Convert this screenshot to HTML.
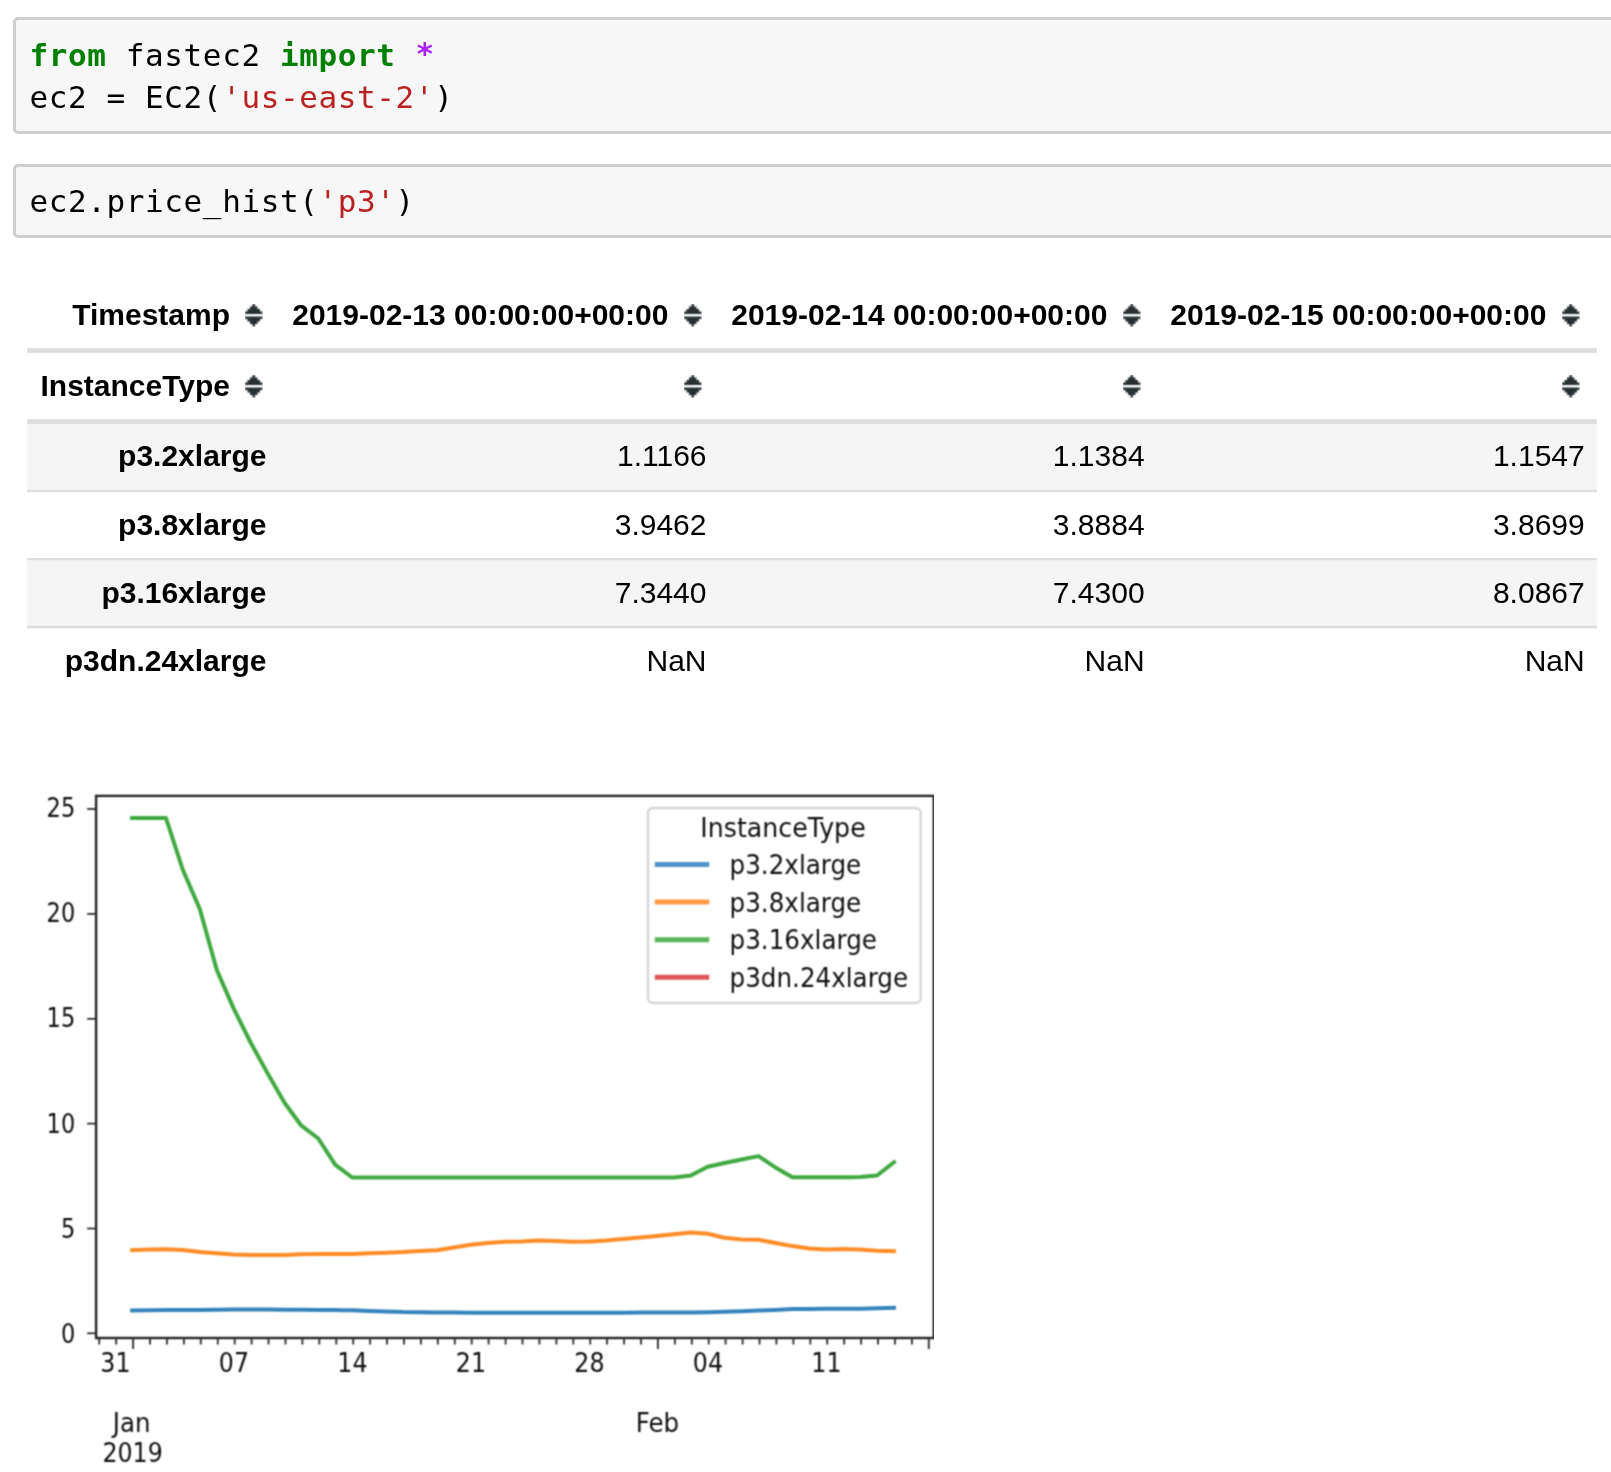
<!DOCTYPE html>
<html><head><meta charset="utf-8"><title>fastec2 price_hist</title>
<style>
html,body{margin:0;padding:0;background:#fff;}
body{width:1611px;height:1472px;position:relative;overflow:hidden;font-family:"Liberation Sans",Arial,sans-serif;color:#000;}
.cell{will-change:transform;position:absolute;left:13.3px;width:1640px;box-sizing:border-box;border:3px solid #cfcfcf;border-radius:5px;background:#f7f7f7;}
.cell pre{margin:0;position:absolute;left:13.4px;font-family:"DejaVu Sans Mono","Liberation Mono",monospace;font-size:31px;letter-spacing:0.61px;line-height:42.2px;color:#000;white-space:pre;}
.k{color:#008000;font-weight:bold;}
.o{color:#aa22ff;font-weight:bold;position:relative;top:-2.2px;left:0.5px;}
.s{color:#ba2121;}
#c1{top:17.1px;height:116.7px;}
#c2{top:164.2px;height:73.9px;}
.tbl{will-change:transform;position:absolute;left:27.1px;top:282px;width:1569.8px;font-size:30px;}
.row{position:absolute;left:0;width:100%;box-sizing:border-box;}
.row div{position:absolute;top:0;height:100%;text-align:right;white-space:nowrap;}
.hd{font-weight:bold;height:71px;}
.c0{left:0;width:239.5px;font-weight:bold;}
.c1{left:252px;width:427.5px;}
.c2{left:691px;width:426.6px;}
.c3{left:1130px;width:427.7px;}
.hd .c0{width:203px;} .hd .c1{width:389.4px;} .hd .c2{width:389.4px;} .hd .c3{width:389.4px;}
.si-w{position:absolute;top:0;height:100%;width:23.5px;}
.si{position:absolute;top:19.3px;left:0;}
.br{height:68.2px;line-height:65.8px;}
.br div{top:2.4px;height:65.8px;}
.tbg{position:absolute;left:0;top:0;}
.chart{position:absolute;left:0;top:760px;}
.tk{font-family:"DejaVu Sans",sans-serif;font-size:25px;fill:#111;}


</style></head><body>
<div class="cell" id="c1"><pre style="top:14px"><span class="k">from</span> fastec2 <span class="k">import</span> <span class="o">*</span>
ec2 = EC2(<span class="s">'us-east-2'</span>)</pre></div>
<div class="cell" id="c2"><pre style="top:12.8px">ec2.price_hist(<span class="s">'p3'</span>)</pre></div>

<svg class="tbg" width="1611" height="700" viewBox="0 0 1611 700">
<rect x="27.1" y="423.8" width="1569.8" height="65.9" fill="#f5f5f5"/>
<rect x="27.1" y="560.4" width="1569.8" height="65.4" fill="#f5f5f5"/>
<rect x="27.1" y="348.2" width="1569.8" height="4.7" fill="#ddd"/>
<rect x="27.1" y="419.2" width="1569.8" height="4.7" fill="#ddd"/>
<rect x="27.1" y="489.7" width="1569.8" height="2.4" fill="#ddd"/>
<rect x="27.1" y="558.0" width="1569.8" height="2.4" fill="#ddd"/>
<rect x="27.1" y="625.8" width="1569.8" height="2.5" fill="#ddd"/>
</svg>
<div class="tbl">
 <div class="row hd" style="top:0;line-height:66px">
  <div class="c0">Timestamp</div><div class="c1">2019-02-13 00:00:00+00:00</div><div class="c2">2019-02-14 00:00:00+00:00</div><div class="c3">2019-02-15 00:00:00+00:00</div>
  <span class="si-w" style="left:215.2px"><svg class="si" width="23.5" height="28.5" viewBox="-3 -3 23.5 28.5"><path d="M7.5 0h2.5v2.5h-2.5zM5 2.5h7.5v2.5h-7.5zM2.5 5h12.5v2.5h-12.5zM0 7.5h17.5v2.5h-17.5zM0 12.5h17.5v2.5h-17.5zM2.5 15h12.5v2.5h-12.5zM5 17.5h7.5v2.5h-7.5zM7.5 20h2.5v2.5h-2.5z" fill="#283033" filter="url(#bl)"/></svg></span><span class="si-w" style="left:654.1px"><svg class="si" width="23.5" height="28.5" viewBox="-3 -3 23.5 28.5"><path d="M7.5 0h2.5v2.5h-2.5zM5 2.5h7.5v2.5h-7.5zM2.5 5h12.5v2.5h-12.5zM0 7.5h17.5v2.5h-17.5zM0 12.5h17.5v2.5h-17.5zM2.5 15h12.5v2.5h-12.5zM5 17.5h7.5v2.5h-7.5zM7.5 20h2.5v2.5h-2.5z" fill="#283033" filter="url(#bl)"/></svg></span><span class="si-w" style="left:1092.95px"><svg class="si" width="23.5" height="28.5" viewBox="-3 -3 23.5 28.5"><path d="M7.5 0h2.5v2.5h-2.5zM5 2.5h7.5v2.5h-7.5zM2.5 5h12.5v2.5h-12.5zM0 7.5h17.5v2.5h-17.5zM0 12.5h17.5v2.5h-17.5zM2.5 15h12.5v2.5h-12.5zM5 17.5h7.5v2.5h-7.5zM7.5 20h2.5v2.5h-2.5z" fill="#283033" filter="url(#bl)"/></svg></span><span class="si-w" style="left:1532.05px"><svg class="si" width="23.5" height="28.5" viewBox="-3 -3 23.5 28.5"><path d="M7.5 0h2.5v2.5h-2.5zM5 2.5h7.5v2.5h-7.5zM2.5 5h12.5v2.5h-12.5zM0 7.5h17.5v2.5h-17.5zM0 12.5h17.5v2.5h-17.5zM2.5 15h12.5v2.5h-12.5zM5 17.5h7.5v2.5h-7.5zM7.5 20h2.5v2.5h-2.5z" fill="#283033" filter="url(#bl)"/></svg></span>
 </div>
 <div class="row hd" style="top:71px;line-height:66px">
  <div class="c0">InstanceType</div>
  <span class="si-w" style="left:215.2px"><svg class="si" width="23.5" height="28.5" viewBox="-3 -3 23.5 28.5"><path d="M7.5 0h2.5v2.5h-2.5zM5 2.5h7.5v2.5h-7.5zM2.5 5h12.5v2.5h-12.5zM0 7.5h17.5v2.5h-17.5zM0 12.5h17.5v2.5h-17.5zM2.5 15h12.5v2.5h-12.5zM5 17.5h7.5v2.5h-7.5zM7.5 20h2.5v2.5h-2.5z" fill="#283033" filter="url(#bl)"/></svg></span><span class="si-w" style="left:654.1px"><svg class="si" width="23.5" height="28.5" viewBox="-3 -3 23.5 28.5"><path d="M7.5 0h2.5v2.5h-2.5zM5 2.5h7.5v2.5h-7.5zM2.5 5h12.5v2.5h-12.5zM0 7.5h17.5v2.5h-17.5zM0 12.5h17.5v2.5h-17.5zM2.5 15h12.5v2.5h-12.5zM5 17.5h7.5v2.5h-7.5zM7.5 20h2.5v2.5h-2.5z" fill="#283033" filter="url(#bl)"/></svg></span><span class="si-w" style="left:1092.95px"><svg class="si" width="23.5" height="28.5" viewBox="-3 -3 23.5 28.5"><path d="M7.5 0h2.5v2.5h-2.5zM5 2.5h7.5v2.5h-7.5zM2.5 5h12.5v2.5h-12.5zM0 7.5h17.5v2.5h-17.5zM0 12.5h17.5v2.5h-17.5zM2.5 15h12.5v2.5h-12.5zM5 17.5h7.5v2.5h-7.5zM7.5 20h2.5v2.5h-2.5z" fill="#283033" filter="url(#bl)"/></svg></span><span class="si-w" style="left:1532.05px"><svg class="si" width="23.5" height="28.5" viewBox="-3 -3 23.5 28.5"><path d="M7.5 0h2.5v2.5h-2.5zM5 2.5h7.5v2.5h-7.5zM2.5 5h12.5v2.5h-12.5zM0 7.5h17.5v2.5h-17.5zM0 12.5h17.5v2.5h-17.5zM2.5 15h12.5v2.5h-12.5zM5 17.5h7.5v2.5h-7.5zM7.5 20h2.5v2.5h-2.5z" fill="#283033" filter="url(#bl)"/></svg></span>
 </div>
 <div class="row br" style="top:138.8px"><div class="c0">p3.2xlarge</div><div class="c1">1.1166</div><div class="c2">1.1384</div><div class="c3">1.1547</div></div>
 <div class="row br" style="top:207.6px"><div class="c0">p3.8xlarge</div><div class="c1">3.9462</div><div class="c2">3.8884</div><div class="c3">3.8699</div></div>
 <div class="row br" style="top:275.8px"><div class="c0">p3.16xlarge</div><div class="c1">7.3440</div><div class="c2">7.4300</div><div class="c3">8.0867</div></div>
 <div class="row br" style="top:344px"><div class="c0">p3dn.24xlarge</div><div class="c1">NaN</div><div class="c2">NaN</div><div class="c3">NaN</div></div>
</div>
<svg class="chart" width="1611" height="712" viewBox="0 760 1611 712">
<defs><filter id="bl" x="0" y="0" width="100%" height="100%" color-interpolation-filters="sRGB"><feConvolveMatrix order="3" kernelMatrix="1 2 1 2 4 2 1 2 1" divisor="16" edgeMode="none" preserveAlpha="false"/></filter></defs>
<g class="plot" filter="url(#bl)">
<path d="M132.1 1310.4 L149.0 1310.3 L166.0 1310.1 L182.9 1310.0 L199.8 1309.9 L216.8 1309.8 L233.7 1309.6 L250.6 1309.5 L267.5 1309.6 L284.5 1309.7 L301.4 1309.8 L318.3 1310.0 L335.3 1310.1 L352.2 1310.3 L369.1 1310.9 L386.0 1311.4 L403.0 1312.0 L419.9 1312.2 L436.8 1312.4 L453.8 1312.6 L470.7 1312.8 L487.6 1312.8 L504.6 1312.8 L521.5 1312.8 L538.4 1312.7 L555.4 1312.7 L572.3 1312.7 L589.2 1312.7 L606.1 1312.7 L623.1 1312.7 L640.0 1312.6 L656.9 1312.6 L673.9 1312.6 L690.8 1312.6 L707.7 1312.2 L724.6 1311.7 L741.6 1311.3 L758.5 1310.6 L775.4 1309.9 L792.4 1309.0 L809.3 1308.9 L826.2 1308.8 L843.2 1308.8 L860.1 1308.7 L877.0 1308.2 L894.0 1307.8" fill="none" stroke="#1f77b4" stroke-opacity="0.9" stroke-width="4" stroke-linecap="square" stroke-linejoin="round"/>
<path d="M132.1 1250.2 L149.0 1249.6 L166.0 1249.3 L182.9 1249.9 L199.8 1252.1 L216.8 1253.3 L233.7 1254.6 L250.6 1254.9 L267.5 1254.9 L284.5 1254.9 L301.4 1254.3 L318.3 1254.0 L335.3 1254.0 L352.2 1254.0 L369.1 1253.3 L386.0 1252.7 L403.0 1252.1 L419.9 1251.1 L436.8 1250.2 L453.8 1247.5 L470.7 1244.8 L487.6 1243.0 L504.6 1241.8 L521.5 1241.5 L538.4 1240.6 L555.4 1240.9 L572.3 1241.8 L589.2 1241.5 L606.1 1240.6 L623.1 1239.0 L640.0 1237.5 L656.9 1236.0 L673.9 1234.3 L690.8 1232.5 L707.7 1233.7 L724.6 1237.8 L741.6 1239.5 L758.5 1239.8 L775.4 1243.0 L792.4 1246.1 L809.3 1248.5 L826.2 1249.4 L843.2 1249.0 L860.1 1249.6 L877.0 1250.8 L894.0 1251.3" fill="none" stroke="#ff7f0e" stroke-opacity="0.9" stroke-width="4" stroke-linecap="square" stroke-linejoin="round"/>
<path d="M132.1 818.1 L149.0 818.1 L166.0 818.1 L182.9 870.0 L199.8 909.0 L216.8 970.0 L233.7 1008.6 L250.6 1042.5 L267.5 1073.1 L284.5 1102.8 L301.4 1125.7 L318.3 1138.5 L335.3 1164.8 L352.2 1177.5 L369.1 1177.5 L386.0 1177.5 L403.0 1177.5 L419.9 1177.5 L436.8 1177.5 L453.8 1177.5 L470.7 1177.5 L487.6 1177.5 L504.6 1177.5 L521.5 1177.5 L538.4 1177.5 L555.4 1177.5 L572.3 1177.5 L589.2 1177.5 L606.1 1177.5 L623.1 1177.5 L640.0 1177.5 L656.9 1177.5 L673.9 1177.4 L690.8 1175.5 L707.7 1166.8 L724.6 1163.0 L741.6 1159.5 L758.5 1156.1 L775.4 1167.4 L792.4 1177.3 L809.3 1177.3 L826.2 1177.3 L843.2 1177.3 L860.1 1176.9 L877.0 1175.5 L894.0 1162.2" fill="none" stroke="#2ca02c" stroke-opacity="0.9" stroke-width="4" stroke-linecap="square" stroke-linejoin="round"/>
<rect x="96.1" y="795.9" width="837.7" height="542.1" fill="none" stroke="#242424" stroke-width="2.4"/>
<line x1="87.1" x2="96.1" y1="1333.3" y2="1333.3" stroke="#222" stroke-width="1.7"/>
<text transform="translate(75.2 1342.8) scale(0.9 1.07)" text-anchor="end" class="tk">0</text>
<line x1="87.1" x2="96.1" y1="1228.5" y2="1228.5" stroke="#222" stroke-width="1.7"/>
<text transform="translate(75.2 1238.0) scale(0.9 1.07)" text-anchor="end" class="tk">5</text>
<line x1="87.1" x2="96.1" y1="1123.6" y2="1123.6" stroke="#222" stroke-width="1.7"/>
<text transform="translate(75.2 1133.1) scale(0.9 1.07)" text-anchor="end" class="tk">10</text>
<line x1="87.1" x2="96.1" y1="1018.8" y2="1018.8" stroke="#222" stroke-width="1.7"/>
<text transform="translate(75.2 1026.8) scale(0.9 1.07)" text-anchor="end" class="tk">15</text>
<line x1="87.1" x2="96.1" y1="913.9" y2="913.9" stroke="#222" stroke-width="1.7"/>
<text transform="translate(75.2 921.9) scale(0.9 1.07)" text-anchor="end" class="tk">20</text>
<line x1="87.1" x2="96.1" y1="809.0" y2="809.0" stroke="#222" stroke-width="1.7"/>
<text transform="translate(75.2 817.0) scale(0.9 1.07)" text-anchor="end" class="tk">25</text>
<line x1="99.2" x2="99.2" y1="1338.0" y2="1344.5" stroke="#333" stroke-width="1.9"/>
<line x1="116.2" x2="116.2" y1="1338.0" y2="1344.5" stroke="#333" stroke-width="1.9"/>
<line x1="133.1" x2="133.1" y1="1338.0" y2="1349.0" stroke="#333" stroke-width="1.9"/>
<line x1="150.0" x2="150.0" y1="1338.0" y2="1344.5" stroke="#333" stroke-width="1.9"/>
<line x1="167.0" x2="167.0" y1="1338.0" y2="1344.5" stroke="#333" stroke-width="1.9"/>
<line x1="183.9" x2="183.9" y1="1338.0" y2="1344.5" stroke="#333" stroke-width="1.9"/>
<line x1="200.8" x2="200.8" y1="1338.0" y2="1344.5" stroke="#333" stroke-width="1.9"/>
<line x1="217.8" x2="217.8" y1="1338.0" y2="1344.5" stroke="#333" stroke-width="1.9"/>
<line x1="234.7" x2="234.7" y1="1338.0" y2="1344.5" stroke="#333" stroke-width="1.9"/>
<line x1="251.6" x2="251.6" y1="1338.0" y2="1344.5" stroke="#333" stroke-width="1.9"/>
<line x1="268.5" x2="268.5" y1="1338.0" y2="1344.5" stroke="#333" stroke-width="1.9"/>
<line x1="285.5" x2="285.5" y1="1338.0" y2="1344.5" stroke="#333" stroke-width="1.9"/>
<line x1="302.4" x2="302.4" y1="1338.0" y2="1344.5" stroke="#333" stroke-width="1.9"/>
<line x1="319.3" x2="319.3" y1="1338.0" y2="1344.5" stroke="#333" stroke-width="1.9"/>
<line x1="336.3" x2="336.3" y1="1338.0" y2="1344.5" stroke="#333" stroke-width="1.9"/>
<line x1="353.2" x2="353.2" y1="1338.0" y2="1344.5" stroke="#333" stroke-width="1.9"/>
<line x1="370.1" x2="370.1" y1="1338.0" y2="1344.5" stroke="#333" stroke-width="1.9"/>
<line x1="387.0" x2="387.0" y1="1338.0" y2="1344.5" stroke="#333" stroke-width="1.9"/>
<line x1="404.0" x2="404.0" y1="1338.0" y2="1344.5" stroke="#333" stroke-width="1.9"/>
<line x1="420.9" x2="420.9" y1="1338.0" y2="1344.5" stroke="#333" stroke-width="1.9"/>
<line x1="437.8" x2="437.8" y1="1338.0" y2="1344.5" stroke="#333" stroke-width="1.9"/>
<line x1="454.8" x2="454.8" y1="1338.0" y2="1344.5" stroke="#333" stroke-width="1.9"/>
<line x1="471.7" x2="471.7" y1="1338.0" y2="1344.5" stroke="#333" stroke-width="1.9"/>
<line x1="488.6" x2="488.6" y1="1338.0" y2="1344.5" stroke="#333" stroke-width="1.9"/>
<line x1="505.6" x2="505.6" y1="1338.0" y2="1344.5" stroke="#333" stroke-width="1.9"/>
<line x1="522.5" x2="522.5" y1="1338.0" y2="1344.5" stroke="#333" stroke-width="1.9"/>
<line x1="539.4" x2="539.4" y1="1338.0" y2="1344.5" stroke="#333" stroke-width="1.9"/>
<line x1="556.4" x2="556.4" y1="1338.0" y2="1344.5" stroke="#333" stroke-width="1.9"/>
<line x1="573.3" x2="573.3" y1="1338.0" y2="1344.5" stroke="#333" stroke-width="1.9"/>
<line x1="590.2" x2="590.2" y1="1338.0" y2="1344.5" stroke="#333" stroke-width="1.9"/>
<line x1="607.1" x2="607.1" y1="1338.0" y2="1344.5" stroke="#333" stroke-width="1.9"/>
<line x1="624.1" x2="624.1" y1="1338.0" y2="1344.5" stroke="#333" stroke-width="1.9"/>
<line x1="641.0" x2="641.0" y1="1338.0" y2="1344.5" stroke="#333" stroke-width="1.9"/>
<line x1="657.9" x2="657.9" y1="1338.0" y2="1349.0" stroke="#333" stroke-width="1.9"/>
<line x1="674.9" x2="674.9" y1="1338.0" y2="1344.5" stroke="#333" stroke-width="1.9"/>
<line x1="691.8" x2="691.8" y1="1338.0" y2="1344.5" stroke="#333" stroke-width="1.9"/>
<line x1="708.7" x2="708.7" y1="1338.0" y2="1344.5" stroke="#333" stroke-width="1.9"/>
<line x1="725.6" x2="725.6" y1="1338.0" y2="1344.5" stroke="#333" stroke-width="1.9"/>
<line x1="742.6" x2="742.6" y1="1338.0" y2="1344.5" stroke="#333" stroke-width="1.9"/>
<line x1="759.5" x2="759.5" y1="1338.0" y2="1344.5" stroke="#333" stroke-width="1.9"/>
<line x1="776.4" x2="776.4" y1="1338.0" y2="1344.5" stroke="#333" stroke-width="1.9"/>
<line x1="793.4" x2="793.4" y1="1338.0" y2="1344.5" stroke="#333" stroke-width="1.9"/>
<line x1="810.3" x2="810.3" y1="1338.0" y2="1344.5" stroke="#333" stroke-width="1.9"/>
<line x1="827.2" x2="827.2" y1="1338.0" y2="1344.5" stroke="#333" stroke-width="1.9"/>
<line x1="844.2" x2="844.2" y1="1338.0" y2="1344.5" stroke="#333" stroke-width="1.9"/>
<line x1="861.1" x2="861.1" y1="1338.0" y2="1344.5" stroke="#333" stroke-width="1.9"/>
<line x1="878.0" x2="878.0" y1="1338.0" y2="1344.5" stroke="#333" stroke-width="1.9"/>
<line x1="895.0" x2="895.0" y1="1338.0" y2="1344.5" stroke="#333" stroke-width="1.9"/>
<line x1="911.9" x2="911.9" y1="1338.0" y2="1344.5" stroke="#333" stroke-width="1.9"/>
<line x1="928.8" x2="928.8" y1="1338.0" y2="1349.0" stroke="#333" stroke-width="1.9"/>
<text transform="translate(115.4 1371.9) scale(0.95 1.07)" text-anchor="middle" class="tk">31</text>
<text transform="translate(233.9 1371.9) scale(0.95 1.07)" text-anchor="middle" class="tk">07</text>
<text transform="translate(352.4 1371.9) scale(0.95 1.07)" text-anchor="middle" class="tk">14</text>
<text transform="translate(470.9 1371.9) scale(0.95 1.07)" text-anchor="middle" class="tk">21</text>
<text transform="translate(589.4 1371.9) scale(0.95 1.07)" text-anchor="middle" class="tk">28</text>
<text transform="translate(707.9 1371.9) scale(0.95 1.07)" text-anchor="middle" class="tk">04</text>
<text transform="translate(826.4 1371.9) scale(0.95 1.07)" text-anchor="middle" class="tk">11</text>
<text transform="translate(131.6 1431.8) scale(0.98 1.07)" text-anchor="middle" class="tk">Jan</text>
<text transform="translate(132.6 1462.0) scale(0.95 1.07)" text-anchor="middle" class="tk">2019</text>
<text transform="translate(657.4 1431.8) scale(0.98 1.07)" text-anchor="middle" class="tk">Feb</text>
<rect x="648" y="808" width="272.7" height="195" rx="5" ry="5" fill="#fff" fill-opacity="0.8" stroke="#d2d2d2" stroke-opacity="0.9" stroke-width="2.4"/>
<text transform="translate(783.0 836.9) scale(1.01 1.07)" text-anchor="middle" class="tk">InstanceType</text>
<line x1="654.8" x2="709.2" y1="864.5" y2="864.5" stroke="#1f77b4" stroke-opacity="0.78" stroke-width="5"/>
<text transform="translate(729.6 874.0) scale(0.985 1.07)" text-anchor="start" class="tk">p3.2xlarge</text>
<line x1="654.8" x2="709.2" y1="902.1" y2="902.1" stroke="#ff7f0e" stroke-opacity="0.78" stroke-width="5"/>
<text transform="translate(729.6 911.6) scale(0.985 1.07)" text-anchor="start" class="tk">p3.8xlarge</text>
<line x1="654.8" x2="709.2" y1="939.7" y2="939.7" stroke="#2ca02c" stroke-opacity="0.78" stroke-width="5"/>
<text transform="translate(729.6 949.2) scale(0.985 1.07)" text-anchor="start" class="tk">p3.16xlarge</text>
<line x1="654.8" x2="709.2" y1="977.3" y2="977.3" stroke="#d62728" stroke-opacity="0.78" stroke-width="5"/>
<text transform="translate(729.6 986.8) scale(0.985 1.07)" text-anchor="start" class="tk">p3dn.24xlarge</text>
</g></svg>
</body></html>
